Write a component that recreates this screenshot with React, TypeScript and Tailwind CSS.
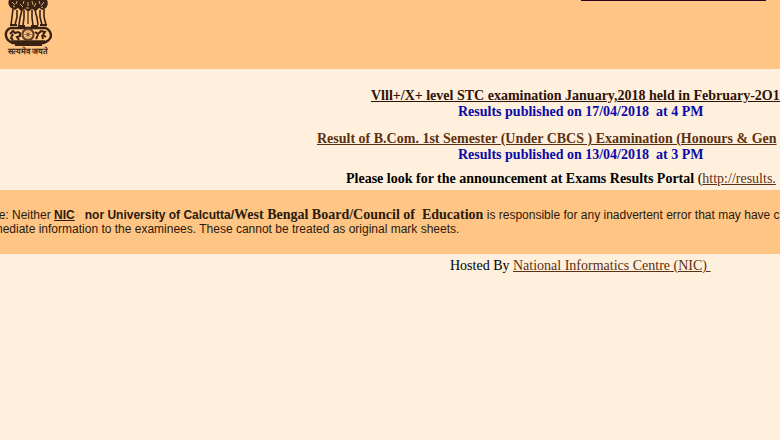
const NOTICES = [
  {
    title: 'Vlll+/X+ level STC examination January,2018 held in February-2O18',
    published: 'Results published on 17/04/2018 \u00a0at 4 PM',
    indent: 'pl-[371px]',
    color: 'text-[#2e1208]',
  },
  {
    title: 'Result of B.Com. 1st Semester (Under CBCS ) Examination (Honours & Gen',
    published: 'Results published on 13/04/2018 \u00a0at 3 PM',
    indent: 'pl-[317px]',
    color: 'text-[#5c3010]',
  },
]

function Emblem() {
  return (
    <svg viewBox="0 0 48 47" className="h-[47px] w-12" fill="none" stroke="#3a2212" aria-hidden="true">
      {/* manes */}
      <path d="M5 0Q3 4 7 8L11 10L14 8L17 11L21 9L24 12L28 9L32 11L35 8L38 10L42 8Q45 4 43 0Z" fill="#3a2212" stroke="none" />
      <path d="M8 2l3 3M13 1l-1 3M16 4l3 3M20 1l-1 3M24 2v4M28 1l1 4M32 3l-2 4M35 1l1 3M40 2l-3 4M9 6l2 1M22 8h3M37 8l2-1" stroke="#d7a873" strokeWidth="1" />
      {/* legs */}
      <path d="M9 9L8 17L7 25M13 10L13 17L11 25M18 10L16 18L15 25M20 10L20 18L19 25M28 10L28 18L29 25M31 10L33 18L34 25M36 10L36 17L38 25M40 9L40 17L42 25" strokeWidth="1.6" />
      <path d="M24 11v13" stroke="#8b6038" strokeWidth="2" />
      <path d="M6 25h7M14 26h7M27 26h7M36 25h7" strokeWidth="2" />
      {/* abacus */}
      <path d="M6 28Q1 31 2 36Q3 41 9 43H39Q46 41 47 36Q47 31 42 28" strokeWidth="2.4" />
      <path d="M6 28H42" strokeWidth="2.6" />
      <path d="M7 42H41" strokeWidth="3.4" />
      <circle cx="24" cy="34.5" r="5.6" stroke="#5b3a20" strokeWidth="2" />
      <circle cx="24" cy="34.5" r="1.5" fill="#5b3a20" stroke="none" />
      <path d="M24 29v11M18 34.5h12M20 30.5l8 8M28 30.5l-8 8" stroke="#8b6038" strokeWidth=".7" />
      <path d="M6 34l3-3 2 2 3-1 2 1v3l-3 1 2 3M9 34l-2 4 2 2M31 32l3 2 3-3 4 1-2 3 3 2M34 35l-2 4M38 35l1 4" strokeWidth="2" />
      <path d="M11 45H38" strokeWidth="2" />
    </svg>
  )
}

export default function App() {
  return (
    <div className="min-h-screen overflow-hidden whitespace-nowrap bg-[#fff0de] font-['Liberation_Serif',serif] text-sm leading-4 text-black">
      <header className="flex h-[69px] items-start justify-between bg-[#ffc585]">
        <div className="flex flex-col items-center pl-1">
          <Emblem />
          <span className="text-[8px] font-bold leading-[10px] text-[#3a2212]">सत्यमेव जयते</span>
        </div>
        <div className="mr-[14px] h-px w-[185px] bg-[#300020]" />
      </header>

      <main>
        {NOTICES.map((n) => (
          <section key={n.title} className="pt-[19px] font-bold first:mb-[-8px]">
            <p className={n.indent}>
              <a href="#" className={`underline ${n.color}`}>{n.title}</a>
            </p>
            <p className="pl-[458px] text-[#0a0aa8]">{n.published}</p>
          </section>
        ))}
        <p className="pb-[3px] pl-[346px] pt-2">
          <b>Please look for the announcement at Exams Results Portal</b>{' '}
          (<a href="#" className="text-[#5c3010] underline">http://results.</a>
        </p>
      </main>

      <div className="h-[64px] bg-[#ffc585] pt-[18px] font-['Liberation_Sans',sans-serif] text-xs leading-[14px] text-[#2a1a0c]">
        <p className="-ml-5">
          Note: Neither <a href="#" className="font-bold underline">NIC</a>
          <b> &nbsp; nor University of Calcutta/</b>
          <b className="font-['Liberation_Serif',serif] text-sm leading-[14px]">West Bengal Board/Council of &nbsp;Education</b>{' '}
          is responsible for any inadvertent error that may have cre
        </p>
        <p className="-ml-5">immediate information to the examinees. These cannot be treated as original mark sheets.</p>
      </div>

      <footer className="pl-[450px] pt-1">
        Hosted By <a href="#" className="text-[#5c3010] underline">National Informatics Centre (NIC)&nbsp;</a>
      </footer>
    </div>
  )
}
